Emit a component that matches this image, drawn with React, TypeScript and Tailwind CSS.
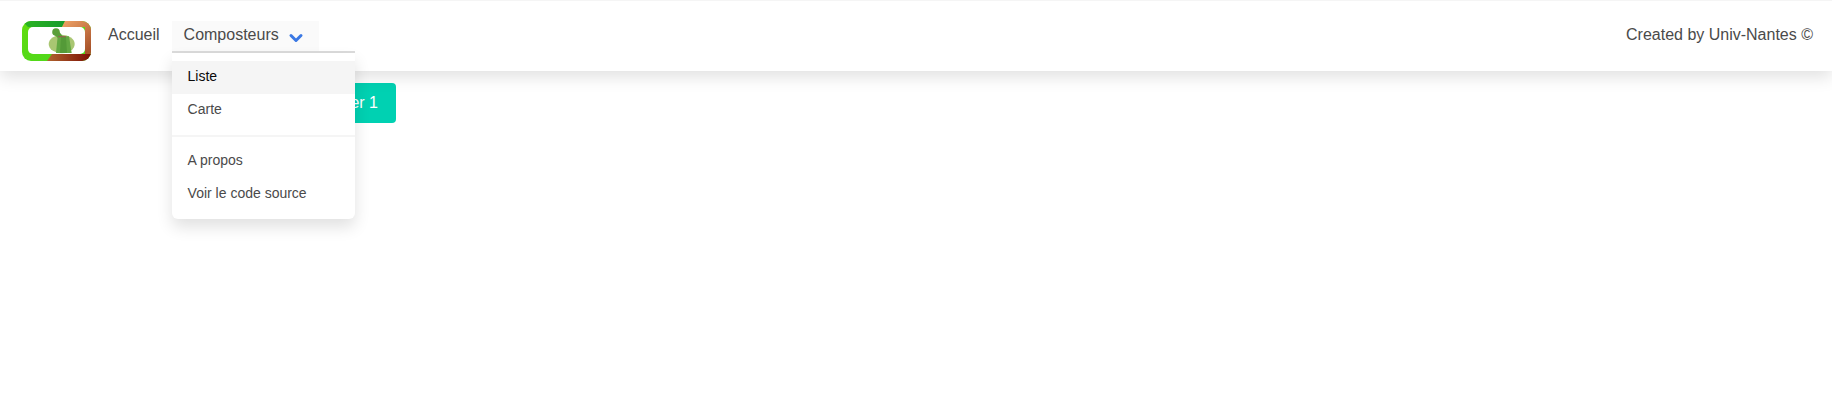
import React from 'react';
import { ChevronDown } from 'lucide-react';

const Logo = () => (
  <svg width="69" height="40" viewBox="0 0 69 40" className="block">
    <defs>
      <linearGradient id="lg-left" x1="0" y1="0" x2="0.6" y2="1">
        <stop offset="0" stopColor="#62dc0e" />
        <stop offset="1" stopColor="#4fd81c" />
      </linearGradient>
      <linearGradient id="lg-top" x1="0" y1="0" x2="1" y2="0">
        <stop offset="0" stopColor="#2cb521" />
        <stop offset="1" stopColor="#169a2c" />
      </linearGradient>
      <linearGradient id="lg-right" x1="0" y1="0" x2="0.7" y2="1">
        <stop offset="0" stopColor="#f0a468" />
        <stop offset="1" stopColor="#a8532a" />
      </linearGradient>
      <linearGradient id="lg-bottom" x1="0" y1="0" x2="1" y2="0">
        <stop offset="0" stopColor="#b0652f" />
        <stop offset="1" stopColor="#7c0d04" />
      </linearGradient>
      <clipPath id="lg-frame">
        <rect x="0" y="0" width="69" height="40" rx="9" />
      </clipPath>
    </defs>
    <g clipPath="url(#lg-frame)">
      <rect width="69" height="40" fill="url(#lg-left)" />
      <polygon points="0,0 43,0 40,6 6,6" fill="url(#lg-top)" />
      <polygon points="43,0 69,0 69,34 63,34 63,6 40,6" fill="url(#lg-right)" />
      <polygon points="25,40 30,33 69,33 69,40" fill="url(#lg-bottom)" />
    </g>
    <rect x="6" y="6" width="57" height="27" rx="5" fill="#fff" />
    <ellipse cx="39.7" cy="23" rx="13" ry="9.3" fill="#a9c672" />
    <polygon points="31.5,13 35,8 41,15.5 37,18" fill="#5a9e3a" />
    <circle cx="34" cy="11" r="3.8" fill="#5a9e3a" />
    <polygon points="35.7,15.3 47,15.3 49.7,32 34,32" fill="#63a843" />
    <polygon points="39,16 44,16 45,32 38,32" fill="#549a38" />
    <rect x="36" y="15.2" width="8" height="1" fill="#9a5a50" />
  </svg>
);

const linkClass = 'block px-4 h-[33px] leading-[31px] text-[14px] text-[#4a4a4a]';

export default function App() {
  return (
    <div className="min-h-[404px] bg-white font-['Liberation_Sans',Arial,sans-serif]">
      <nav className="relative z-10 h-[71px] border-t border-[#f5f5f5] bg-white shadow-[0_6px_16px_rgba(10,10,10,0.12)] flex items-start justify-between pl-[22px] pr-[19px] pt-[20px]">
        <div className="flex items-start">
          <Logo />
          <a className="ml-[17px] mt-[2px] text-[16px] leading-6 text-[#4a4a4a]">Accueil</a>
          <div className="relative ml-[12px] w-[183px] h-[32px] border-b-2 border-[#dbdbdb]">
            <div className="w-[147px] h-[30px] bg-[#fafafa] pl-3 flex items-start pt-[2px] text-[16px] leading-6 text-[#4a4a4a]">
              Composteurs
              <ChevronDown size={20} strokeWidth={3.6} className="ml-[7px] mt-[5px] text-[#3a78e4]" />
            </div>
            <div className="absolute left-0 top-[32px] w-[183px] bg-white rounded-b-md pt-2 pb-2 shadow-[0_8px_16px_rgba(10,10,10,0.12)]">
              <a className={`${linkClass} bg-[#f5f5f5] !text-[#0a0a0a]`}>Liste</a>
              <a className={linkClass}>Carte</a>
              <hr className="my-2 h-[2px] border-0 bg-[#f5f5f5]" />
              <a className={linkClass}>A propos</a>
              <a className={linkClass}>Voir le code source</a>
            </div>
          </div>
        </div>
        <span className="mt-[2px] text-[16px] leading-6 text-[#4a4a4a]">Created by Univ-Nantes ©</span>
      </nav>
      <main className="pt-[12px] pl-[277px]">
        <button className="h-[40px] w-[119px] rounded bg-[#00d1b2] pr-[18px] text-right text-[16px] text-white">Composter 1</button>
      </main>
    </div>
  );
}
